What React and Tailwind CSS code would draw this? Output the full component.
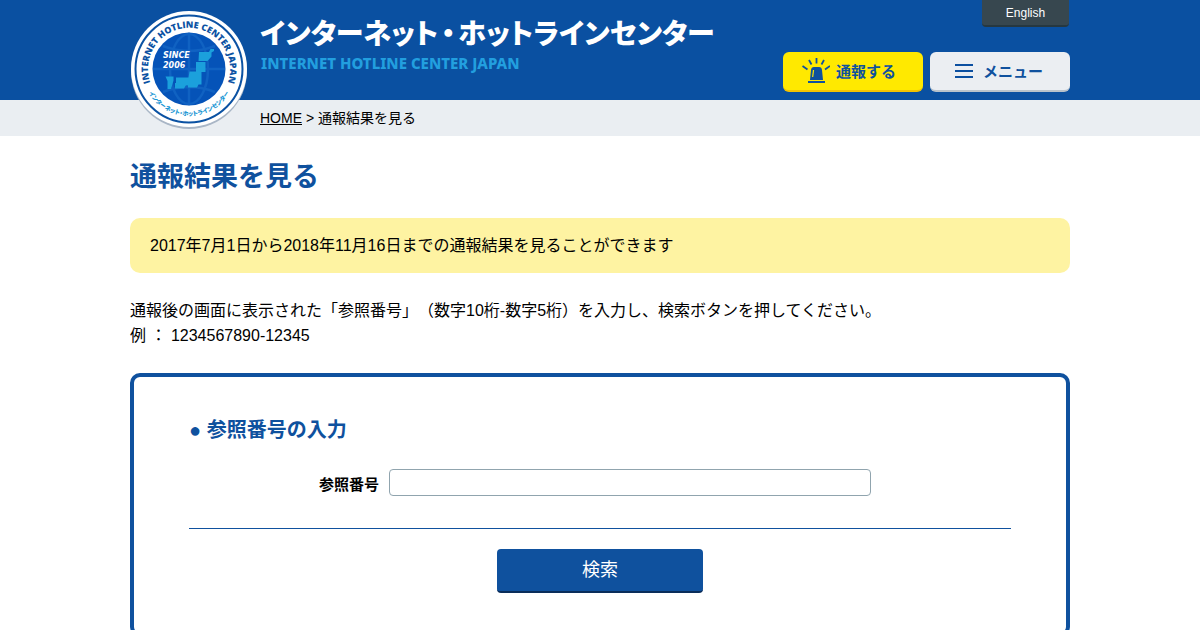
const sans = "font-['Liberation_Sans','Noto_Sans_CJK_JP',sans-serif]";

function Emblem() {
  return (
    <svg viewBox="0 0 118 120" className="h-[120px] w-[118px]" role="img">
      <circle cx="59" cy="61" r="58" fill="#a9b6c6" />
      <circle cx="59" cy="59" r="58" fill="#fff" />
      <circle cx="59" cy="59" r="53.500" fill="none" stroke="#0b52a3" strokeWidth="2" />
      <circle cx="59" cy="59" r="36.500" fill="#0553b8" />
      <g fill="none" stroke="#1062c2" strokeWidth="2.500">
        <ellipse cx="59" cy="59" rx="19" ry="35" />
        <path d="M59 23v72M23 59h72M33 36q26 10 52 0M33 82q26 -10 52 0" />
      </g>
      <g fill="#1ba0dc">
        <path d="M69 42h10l1.500 -3h3.500v2l-2.500 1.500v4l-4 4.500h-9z" />
        <path d="M66 52h9.500v10h-4v12.500h-3l-1.500 3h-9v-2h-12v-8h12.500l1 -6h6.500z" />
        <path d="M45 73h11v2l-2 3.500h-9z" />
        <path d="M35.500 66.500h8v4l-2.500 8.500h-3.500v-8z" />
      </g>
      <g fill="#fff" className="font-['DejaVu_Sans',sans-serif] text-[8px] font-bold italic">
        <text x="33" y="48">SINCE</text>
        <text x="33" y="58">2006</text>
      </g>
      <path id="arc-top" d="M20.500 73A41 41 0 1 1 97.500 73" fill="none" />
      <path id="arc-bottom" d="M15.600 77A47 47 0 0 0 102.400 77" fill="none" />
      <text fill="#0b52a3" textAnchor="middle" className="font-['Open_Sans',sans-serif] text-[9px] font-extrabold">
        <textPath href="#arc-top" startOffset="50%">INTERNET HOTLINE CENTER JAPAN</textPath>
      </text>
      <text
        fill="#1996d4"
        textAnchor="middle"
        className="font-['Noto_Sans_CJK_JP',sans-serif] text-[6px] font-black [font-feature-settings:'palt']"
      >
        <textPath href="#arc-bottom" startOffset="50%">インターネット・ホットラインセンター</textPath>
      </text>
    </svg>
  );
}

function SirenIcon() {
  return (
    <svg viewBox="0 0 28 26" className="h-[26px] w-7" aria-hidden="true">
      <path d="M8 22l1 -10q.3 -3 3 -3h5q2.700 0 3 3l1 10z" fill="#0f519e" />
      <path d="M11.500 12l-.8 7" stroke="#ffe900" strokeWidth="1.200" />
      <path d="M6 24h17" stroke="#0f519e" strokeWidth="2" />
      <path
        d="M14.500 0v5.500M7 2l2.500 4.500M22 2l-2.500 4.500M.5 8l5 3.500M28 8l-5 3.500"
        stroke="#0f519e"
        strokeWidth="1.800"
      />
    </svg>
  );
}

function MenuIcon() {
  return (
    <svg viewBox="0 0 18 14" className="h-[14px] w-[18px]" aria-hidden="true">
      <path d="M0 1h18M0 7h18M0 13h18" stroke="#0b4fa0" strokeWidth="2" />
    </svg>
  );
}

export default function App() {
  return (
    <div className={`${sans} min-h-screen bg-white text-base text-black [text-spacing-trim:space-all]`}>
      <header className="bg-[#0a50a1]">
        <div className="mx-auto flex h-[100px] max-w-[940px] justify-between">
          <div className="flex items-start">
            <a href="#" className="relative z-10 mt-[10px] w-[130px] shrink-0">
              <Emblem />
            </a>
            <div className="pt-[14px]">
              <p className="font-['Noto_Sans_CJK_JP',sans-serif] text-[28px] leading-9 font-black whitespace-nowrap text-white [font-feature-settings:'palt']">
                インターネット<span className="mx-[3px]">・</span>ホットラインセンター
              </p>
              <p className="pt-px pl-px font-['Noto_Sans',sans-serif] text-[15px] leading-6 font-extrabold text-[#229fdf]">
                INTERNET HOTLINE CENTER JAPAN
              </p>
            </div>
          </div>
          <div className="flex flex-col items-end justify-between pb-2">
            <a
              href="#"
              className="mr-px flex h-[27px] w-[87px] items-center justify-center rounded-b border-b-2 border-[#263840] bg-[#37474f] text-xs text-white"
            >
              English
            </a>
            <div className="flex gap-[7px] font-['Noto_Sans_CJK_JP',sans-serif] text-[15px] font-bold text-[#0f519e]">
              <a
                href="#"
                className="flex h-10 w-[140px] items-center gap-[6px] rounded-md border-b-2 border-[#f3c200] bg-[#ffe900] pl-[19px]"
              >
                <SirenIcon />
                通報する
              </a>
              <button className="flex h-10 w-[140px] items-center gap-[10px] rounded-md border-b-2 border-[#b8c2cb] bg-[#ebeef2] pl-[25px]">
                <MenuIcon />
                メニュー
              </button>
            </div>
          </div>
        </div>
      </header>

      <nav className="bg-[#eaeef2]">
        <div className="mx-auto max-w-[940px] pl-[130px] text-sm leading-9">
          <a href="#" className="underline">HOME</a> &gt; 通報結果を見る
        </div>
      </nav>

      <main className="mx-auto max-w-[940px] pt-5">
        <h1 className="text-[27px] leading-[42px] font-bold text-[#0f519e]">通報結果を見る</h1>
        <p className="mt-5 rounded-[10px] bg-[#fef3a2] px-5 py-[15px] leading-[25px]">
          2017年7月1日から2018年11月16日までの通報結果を見ることができます
        </p>
        <p className="mt-[25px] leading-[25px]">
          通報後の画面に表示された「参照番号」（数字10桁-数字5桁）を入力し、検索ボタンを押してください。
          <br />
          例 ： 1234567890-12345
        </p>

        <form className="mt-[25px] rounded-[10px] border-4 border-[#0f519e] px-[55px] pt-9 pb-10">
          <h2 className="text-xl leading-[34px] font-bold text-[#0f519e]">● 参照番号の入力</h2>
          <div className="mt-[22px] flex items-start justify-center gap-[10px] pr-[10px] pb-[31px]">
            <label htmlFor="ref" className="pt-1 text-[15px] leading-6 font-bold">
              参照番号
            </label>
            <input
              id="ref"
              type="text"
              className="h-[27px] w-[482px] rounded border border-[#90a4ae] px-2"
            />
          </div>
          <div className="flex justify-center border-t border-[#0f519e] pt-5">
            <button
              type="button"
              className="h-11 w-[206px] rounded border-b-2 border-[#0a2d5a] bg-[#0f519e] text-lg text-white"
            >
              検索
            </button>
          </div>
        </form>
      </main>
    </div>
  );
}
